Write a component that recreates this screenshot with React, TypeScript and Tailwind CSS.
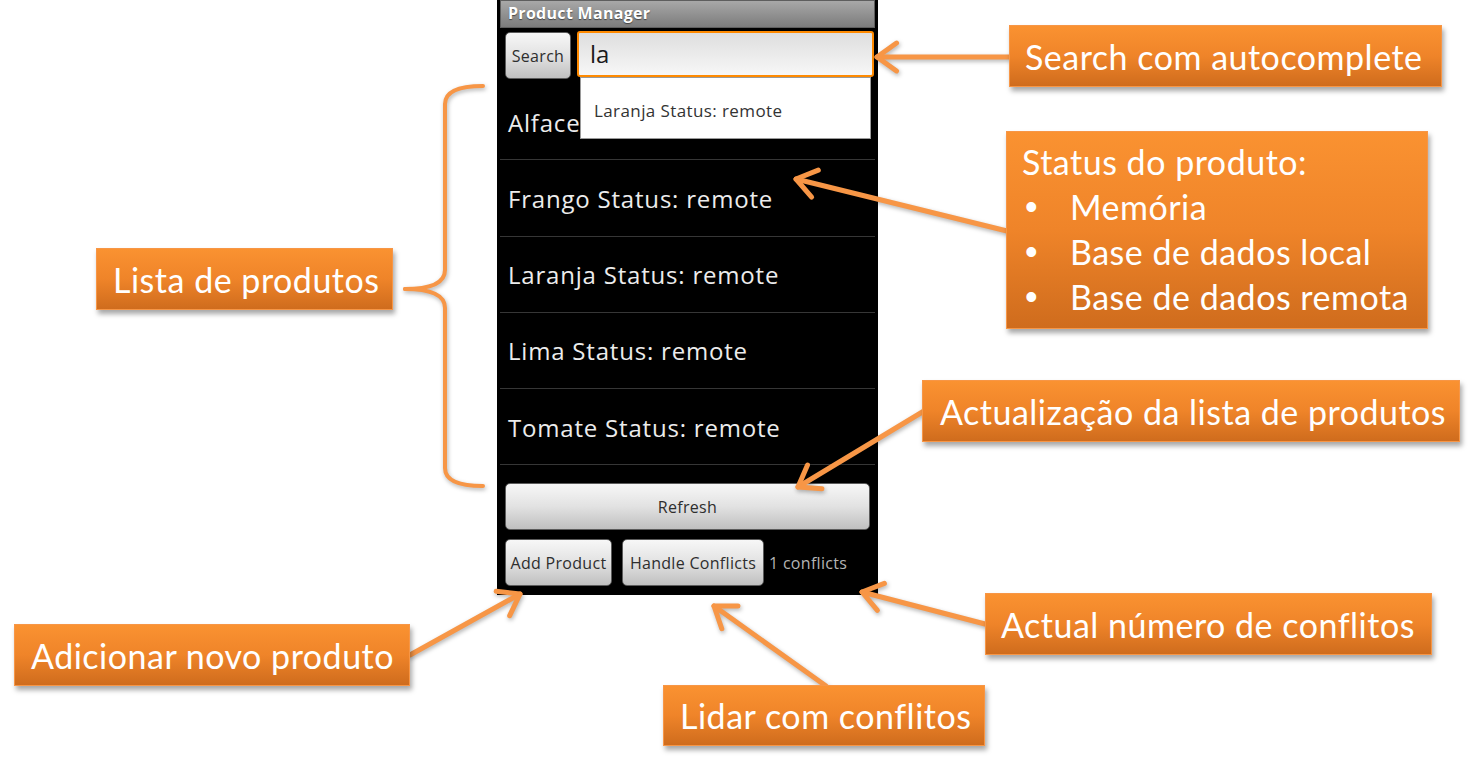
import React from 'react';

type Pt = [number, number];

const ORANGE = '#f79646';

// open chevron arrow, tip at `to`
const Arrow: React.FC<{ from: Pt; to: Pt }> = ({ from, to }) => {
  const [x1, y1] = from;
  const [x2, y2] = to;
  const a = Math.atan2(y1 - y2, x1 - x2);
  const len = 24;
  const spread = 0.62;
  const p1 = `${x2 + len * Math.cos(a + spread)},${y2 + len * Math.sin(a + spread)}`;
  const p2 = `${x2 + len * Math.cos(a - spread)},${y2 + len * Math.sin(a - spread)}`;
  return (
    <g stroke={ORANGE} strokeWidth={5} fill="none" strokeLinecap="round" strokeLinejoin="round">
      <line x1={x1} y1={y1} x2={x2} y2={y2} />
      <polyline points={`${p1} ${x2},${y2} ${p2}`} />
    </g>
  );
};

const AndroidButton: React.FC<{ className: string; children: React.ReactNode }> = ({ className, children }) => (
  <div
    className={`flex items-center justify-center rounded-[5px] border border-[#5c5c5c] bg-linear-to-b from-[#f7f7f7] via-[#e2e2e2] to-[#c0c0c0] text-[16px] tracking-[0.3px] text-[#2e2e2e] ${className}`}
  >
    {children}
  </div>
);

const Callout: React.FC<{ className: string; children: React.ReactNode }> = ({ className, children }) => (
  <div
    className={`absolute border-[1.5px] border-[#f79646] bg-linear-to-b from-[#fa9231] via-[#ef8429] to-[#cf6c1d] text-[34px] tracking-[0.5px] text-white shadow-[2px_4px_5px_rgba(0,0,0,0.35)] ${className}`}
  >
    {children}
  </div>
);

const products = ['Alface', 'Frango Status: remote', 'Laranja Status: remote', 'Lima Status: remote', 'Tomate Status: remote'];

const Phone: React.FC = () => (
  <div className="relative ml-[497px] flex h-[595px] w-[381px] flex-col bg-black font-['Open_Sans',sans-serif]">
    <div className="mx-[3px] flex h-[28px] items-center border border-[#5e5e5e] bg-linear-to-b from-[#a8a8a8] to-[#7c7c7c] pb-[2px] pl-[7px] text-[16px] font-bold tracking-[0.3px] text-white [text-shadow:0_1px_1px_rgba(0,0,0,0.5)]">
      Product Manager
    </div>

    <div className="mt-[3px] flex h-[48px] items-start pl-[8px]">
      <AndroidButton className="mt-[1px] h-[47px] w-[66px]">Search</AndroidButton>
      <div className="ml-[6px] flex h-[46px] w-[297px] items-center rounded-[3px] border-2 border-[#ff8a00] bg-linear-to-b from-[#dedede] to-[#f7f7f7] pl-[11px] text-[24px] text-[#1a1a1a]">
        la
      </div>
    </div>

    <div className="absolute left-[83px] top-[77px] z-10 flex h-[62px] w-[291px] items-center border border-[#9a9a9a] bg-white pl-[13px] pt-[6px] text-[17px] tracking-[0.4px] text-[#333]">
      Laranja Status: remote
    </div>

    <div className="mt-[5px] flex flex-col">
      {products.map(p => (
        <div
          key={p}
          className="mx-[3px] flex h-[76.25px] items-center border-b border-[#363636] pl-[8px] pt-[2px] text-[24px] tracking-[0.8px] text-[#ececec]"
        >
          {p}
        </div>
      ))}
    </div>

    <AndroidButton className="mx-[8px] mt-[18px] h-[47px]">Refresh</AndroidButton>

    <div className="mt-[9px] flex items-center pl-[8px]">
      <AndroidButton className="h-[47px] w-[107px]">Add Product</AndroidButton>
      <AndroidButton className="ml-[10px] h-[47px] w-[142px]">Handle Conflicts</AndroidButton>
      <span className="ml-[5px] text-[16px] tracking-[0.3px] text-[#b4b4b4]">1 conflicts</span>
    </div>
  </div>
);

const App: React.FC = () => (
  <div className="relative h-[771px] w-[1471px] overflow-hidden bg-white font-['Lato',sans-serif]">
    <Phone />

    <svg
      className="pointer-events-none absolute inset-0 drop-shadow-[1px_2px_2px_rgba(0,0,0,0.3)]"
      width={1471}
      height={771}
      viewBox="0 0 1471 771"
    >
      <g stroke={ORANGE} strokeWidth={4} fill="none" strokeLinecap="round">
        <path d="M483,86 Q445,86 445,104 L445,270 Q445,289 405,289" />
        <path d="M405,289 Q445,289 445,308 L445,468 Q445,486 483,486" />
      </g>
      <Arrow from={[1009, 57]} to={[877, 57]} />
      <Arrow from={[1007, 231]} to={[796, 179]} />
      <Arrow from={[924, 411]} to={[798, 487]} />
      <Arrow from={[410, 655]} to={[520, 594]} />
      <Arrow from={[826, 686]} to={[714, 606]} />
      <Arrow from={[985, 624]} to={[862, 592]} />
    </svg>

    <Callout className="left-[1009px] top-[25px] flex h-[62px] w-[433px] items-center pl-[15px]">
      Search com autocomplete
    </Callout>

    <Callout className="left-[1006px] top-[131px] h-[198px] w-[422px] pl-[15px] pt-[7px] leading-[45px]">
      <div>Status do produto:</div>
      {['Memória', 'Base de dados local', 'Base de dados remota'].map(s => (
        <div key={s} className="flex">
          <span className="w-[48px] pl-[3px] font-['Liberation_Sans',sans-serif] text-[36px]">•</span>
          <span>{s}</span>
        </div>
      ))}
    </Callout>

    <Callout className="left-[96px] top-[248px] flex h-[62px] w-[297px] items-center pl-[16px]">
      Lista de produtos
    </Callout>

    <Callout className="left-[922px] top-[380px] flex h-[62px] w-[538px] items-center pl-[17px]">
      Actualização da lista de produtos
    </Callout>

    <Callout className="left-[14px] top-[624px] flex h-[62px] w-[396px] items-center pl-[16px]">
      Adicionar novo produto
    </Callout>

    <Callout className="left-[985px] top-[593px] flex h-[62px] w-[447px] items-center pl-[15px]">
      Actual número de conflitos
    </Callout>

    <Callout className="left-[663px] top-[685px] flex h-[61px] w-[322px] items-center pl-[16px]">
      Lidar com conflitos
    </Callout>
  </div>
);

export default App;
